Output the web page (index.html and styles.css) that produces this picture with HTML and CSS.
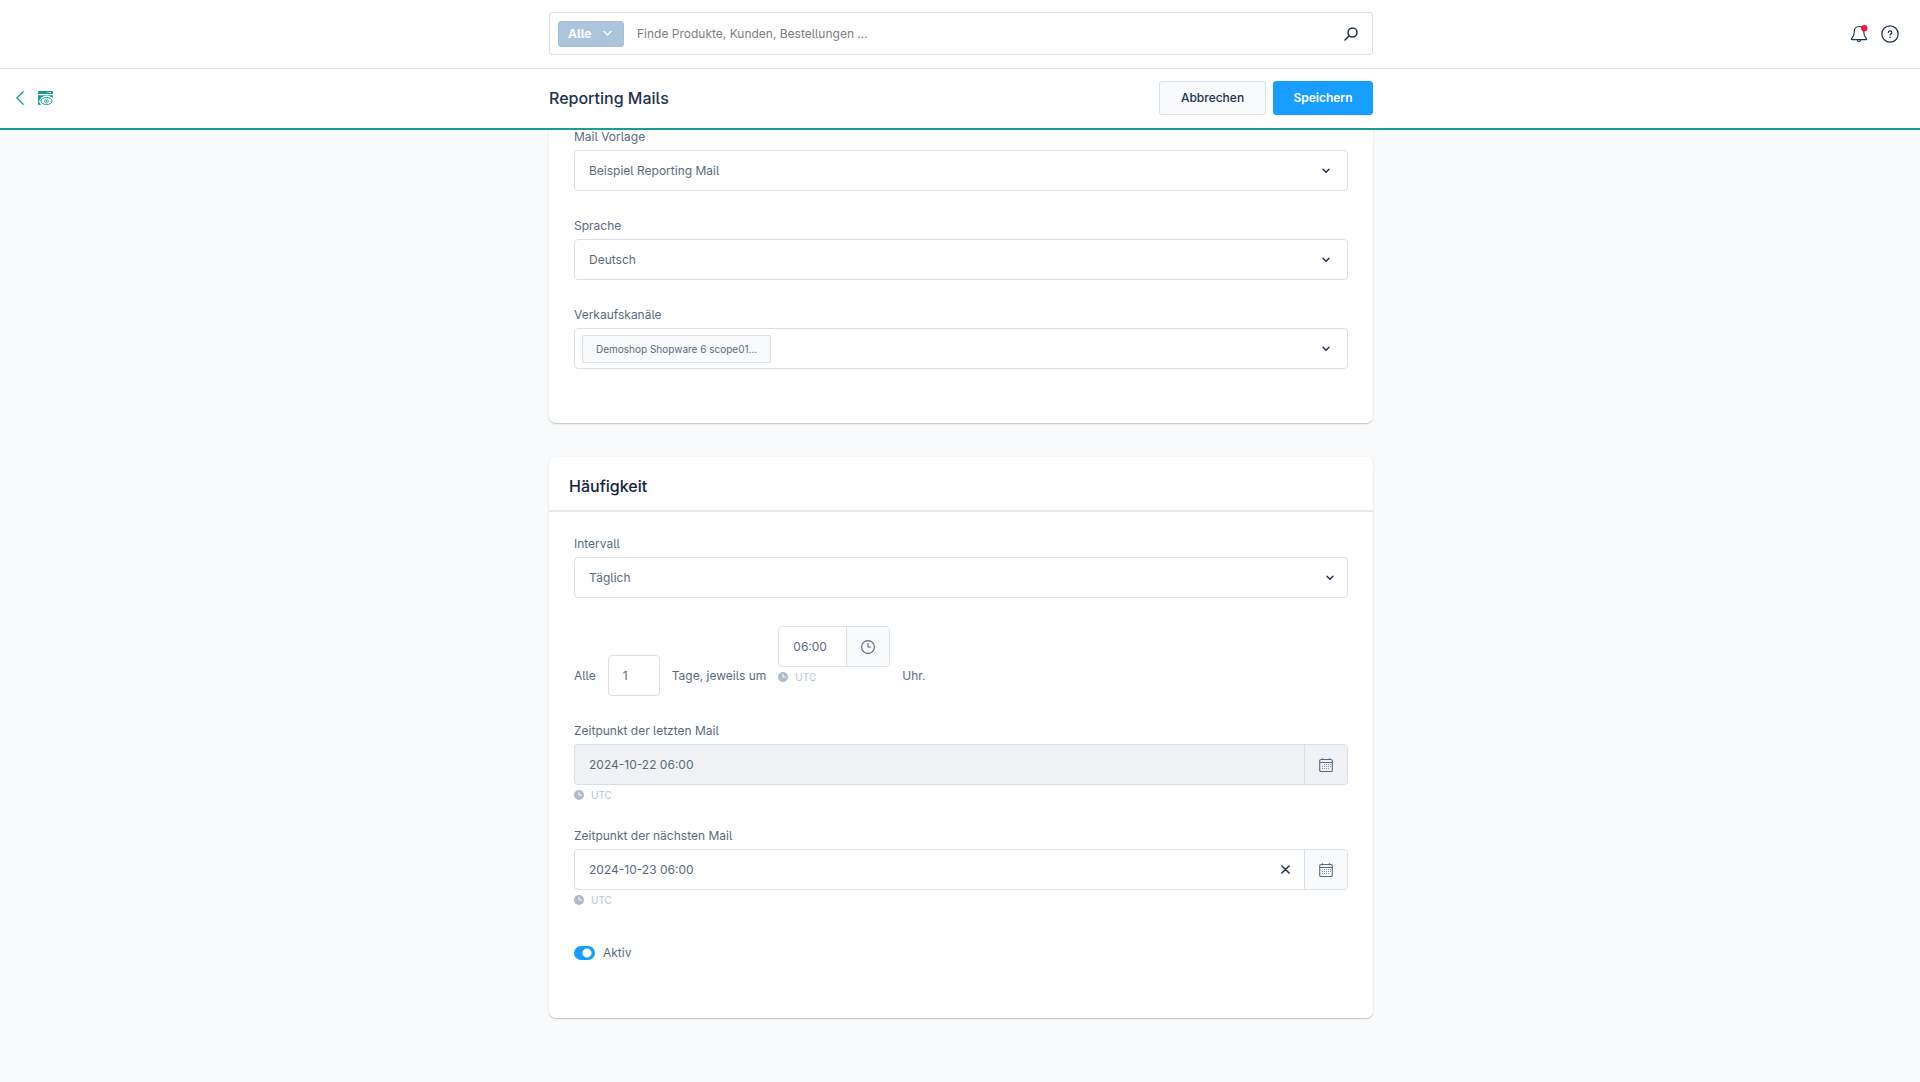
FILE: index.html
```html
<!DOCTYPE html>
<html lang="de">
<head>
<meta charset="utf-8">
<meta name="viewport" content="width=device-width, initial-scale=1">
<title>Reporting Mails</title>
<link rel="stylesheet" href="styles.css">
</head>
<body>
<svg class="sprite" aria-hidden="true">
  <symbol id="chevron" viewBox="0 0 8 6"><path d="M1 1.2 4 4.3 7 1.2" fill="none" stroke="currentColor" stroke-width="1.4" stroke-linecap="round" stroke-linejoin="round"/></symbol>
  <symbol id="clock-solid" viewBox="0 0 10 10"><circle cx="5" cy="5" r="5" fill="currentColor"/><path d="M5 2.2V5.1H7.6" fill="none" stroke="#fff" stroke-width="1" stroke-linecap="round"/></symbol>
  <symbol id="calendar" viewBox="0 0 14 14"><path d="M2 1.500h10a1.300 1.300 0 0 1 1.300 1.300v9.400a1.300 1.300 0 0 1-1.300 1.300H2a1.300 1.300 0 0 1-1.300-1.300V2.800A1.300 1.300 0 0 1 2 1.500zM.7 4.500h12.600M3.500.2v1.400M10.500.2v1.400" fill="none" stroke="currentColor" stroke-width="1.100"/><path d="M5 6.500h7M3 8.500h9M3 10.500h7" fill="none" stroke="currentColor" stroke-width="1" stroke-dasharray="1 1" opacity=".7"/></symbol>
</svg>

<header class="header">
  <div class="topbar">
    <form class="search column" role="search">
      <button class="search-type" type="button">Alle <svg class="search-chevron"><use href="#chevron"/></svg></button>
      <input class="search-input" type="search" aria-label="Suche" placeholder="Finde Produkte, Kunden, Bestellungen ...">
      <button class="icon-button search-submit" type="submit" aria-label="Suchen">
        <svg width="14" height="14" viewBox="0 0 14 14" fill="none" stroke="currentColor" stroke-width="1.500" stroke-linecap="round"><circle cx="8.500" cy="5.500" r="4.500"/><path d="M5.200 8.800 1 13"/></svg>
      </button>
    </form>
    <div class="topbar-actions">
      <button class="icon-button" type="button" aria-label="Benachrichtigungen">
        <svg width="18" height="18" viewBox="0 0 18 18"><path d="M9 1.500c-3 0-4.700 2.200-4.700 4.800 0 3.200-.5 5-2.300 6.900-.9 1-.7 1.500.3 1.500h13.400c1 0 1.200-.5.3-1.500-1.800-1.900-2.300-3.700-2.300-6.900 0-2.600-1.700-4.800-4.700-4.800zM7.200 15c.2 2 3.400 2 3.600 0" fill="none" stroke="currentColor" stroke-width="1.200" stroke-linejoin="round"/><circle cx="14.300" cy="3.200" r="3.200" fill="#ec1c3b"/></svg>
      </button>
      <button class="icon-button" type="button" aria-label="Hilfe">
        <svg width="18" height="18" viewBox="0 0 18 18" fill="none" stroke="currentColor" stroke-linecap="round"><circle cx="9" cy="9" r="8.200" stroke-width="1.200"/><path d="M7.300 7.500c0-2.300 3.500-2.200 3.500 0 0 1.300-1.700 1.300-1.700 2.600" stroke-width="1.200"/><path d="M9.100 12.300v.1" stroke-width="1.400"/></svg>
      </button>
    </div>
  </div>
  <div class="toolbar">
    <div class="toolbar-nav">
      <a class="nav-link" href="#" aria-label="Zurück"><svg width="8" height="14" viewBox="0 0 8 14" fill="none" stroke="currentColor" stroke-width="1.300" stroke-linecap="round" stroke-linejoin="round"><path d="M7.200.7.900 7l6.300 6.300"/></svg></a>
      <a class="nav-link" href="#" aria-label="Reporting"><svg width="15" height="14" viewBox="0 0 15 14"><path d="M1 0h13a1 1 0 0 1 1 1v2H0V1a1 1 0 0 1 1-1zM0 4.200h15v2.600C13 5.300 10.500 4.800 8.300 4.800 5 4.800 2.500 6.700 1 10.300 1.600 12 2 13 3.200 14H1a1 1 0 0 1-1-1z" fill="currentColor"/><path d="M9.500 1.500h1M11.500 1.500h1.500" stroke="#fff" stroke-width="1"/><ellipse cx="8.500" cy="10" rx="5.600" ry="3.500" fill="#fff" stroke="currentColor" stroke-width="1"/><circle cx="8.500" cy="10" r="2" fill="none" stroke="currentColor" stroke-width=".7"/><circle cx="8.500" cy="10" r=".9" fill="currentColor"/></svg></a>
    </div>
    <div class="toolbar-main column">
      <h1 class="page-title">Reporting Mails</h1>
      <button class="button button-cancel" type="button">Abbrechen</button>
      <button class="button button-save" type="submit" form="report-form">Speichern</button>
    </div>
  </div>
</header>

<main class="content">
  <form id="report-form" class="column cards">
    <section class="card card-continued">
      <div class="card-body">
        <div class="field">
          <label class="label" for="template">Mail Vorlage</label>
          <div class="select-box">
            <select class="control" id="template"><option>Beispiel Reporting Mail</option></select>
            <svg class="chevron"><use href="#chevron"/></svg>
          </div>
        </div>
        <div class="field">
          <label class="label" for="language">Sprache</label>
          <div class="select-box">
            <select class="control" id="language"><option>Deutsch</option></select>
            <svg class="chevron"><use href="#chevron"/></svg>
          </div>
        </div>
        <div class="field">
          <label class="label" for="channels">Verkaufskanäle</label>
          <div class="select-box">
            <button class="control control-tags" id="channels" type="button" aria-haspopup="listbox"><span class="tag">Demoshop Shopware 6 scope01...</span></button>
            <svg class="chevron"><use href="#chevron"/></svg>
          </div>
        </div>
      </div>
    </section>

    <section class="card">
      <h2 class="card-title">Häufigkeit</h2>
      <div class="card-body">
        <div class="field">
          <label class="label" for="interval">Intervall</label>
          <div class="select-box">
            <select class="control" id="interval"><option>Täglich</option></select>
            <svg class="chevron chevron-native"><use href="#chevron"/></svg>
          </div>
        </div>

        <div class="schedule">
          <label class="schedule-text" for="every">Alle</label>
          <input class="control control-count" id="every" type="text" inputmode="numeric" value="1">
          <label class="schedule-text" for="time">Tage, jeweils um</label>
          <div class="schedule-time">
            <div class="input-group">
              <input class="group-input" id="time" type="text" value="06:00">
              <button class="group-button" type="button" aria-label="Uhrzeit wählen">
                <svg width="14" height="14" viewBox="0 0 14 14" fill="none" stroke="currentColor" stroke-width="1.100" stroke-linecap="round"><circle cx="7" cy="7" r="6.400"/><path d="M7 3.500V7h2.700"/></svg>
              </button>
            </div>
            <div class="hint"><svg class="hint-icon"><use href="#clock-solid"/></svg>UTC</div>
          </div>
          <span class="schedule-text">Uhr.</span>
        </div>

        <div class="field">
          <label class="label" for="last">Zeitpunkt der letzten Mail</label>
          <div class="input-group is-disabled">
            <input class="group-input" id="last" type="text" value="2024-10-22 06:00" disabled>
            <button class="group-button" type="button" aria-label="Kalender" disabled><svg width="14" height="14"><use href="#calendar"/></svg></button>
          </div>
          <div class="hint"><svg class="hint-icon"><use href="#clock-solid"/></svg>UTC</div>
        </div>

        <div class="field">
          <label class="label" for="next">Zeitpunkt der nächsten Mail</label>
          <div class="input-group">
            <input class="group-input" id="next" type="text" value="2024-10-23 06:00">
            <button class="icon-button clear-button" type="button" aria-label="Leeren"><svg width="9" height="9" viewBox="0 0 8 8" fill="none" stroke="currentColor" stroke-width="1.300" stroke-linecap="round"><path d="M.8.8l6.400 6.400M7.200.8.8 7.200"/></svg></button>
            <button class="group-button" type="button" aria-label="Kalender"><svg width="14" height="14"><use href="#calendar"/></svg></button>
          </div>
          <div class="hint"><svg class="hint-icon"><use href="#clock-solid"/></svg>UTC</div>
        </div>

        <div class="switch-row">
          <input class="switch" id="active" type="checkbox" role="switch" checked>
          <label for="active">Aktiv</label>
        </div>
      </div>
    </section>
  </form>
</main>
</body>
</html>
```
FILE: styles.css
```css
:root {
  --text: #586b80;
  --dark: #1c3350;
  --border: #d8e0e8;
  --surface: #f9fafb;
  --blue: #189eff;
  --green: #1a9c92;
}

* { box-sizing: border-box; }

body {
  margin: 0;
  background: var(--surface);
  color: var(--text);
  font: 12px/18px Inter, "Liberation Sans", sans-serif;
  font-feature-settings: "cv05";
}

button, input, select {
  font: inherit;
  font-feature-settings: inherit;
  color: inherit;
}

button { cursor: pointer; }
svg { display: block; flex: none; }
.sprite { position: absolute; width: 0; height: 0; }

.column {
  width: 100%;
  max-width: 824px;
  grid-column: 2;
}

.icon-button {
  display: flex;
  padding: 0;
  border: 0;
  background: none;
  color: var(--dark);
}

/* Header */
.header {
  position: sticky;
  top: 0;
  z-index: 1;
  background: #fff;
}

.topbar, .toolbar, .content {
  display: grid;
  grid-template-columns: 1fr minmax(0, 824px) 1fr;
  align-items: center;
  padding-left: 2px;
}

.topbar {
  height: 69px;
  padding-bottom: 1px;
  border-bottom: 1px solid var(--border);
}

.search {
  display: flex;
  align-items: center;
  height: 43px;
  padding: 0 14px 0 8px;
  border: 1px solid var(--border);
  border-radius: 3px;
}

.search-type {
  display: flex;
  align-items: center;
  justify-content: space-between;
  width: 66px;
  height: 26px;
  padding: 0 11px 0 9px;
  border: 1px solid #a4bfdc;
  border-radius: 3px;
  background: #adc4dd;
  color: #fff;
  font-weight: 700;
}

.search-chevron { width: 9px; height: 7px; }

.search-input {
  flex: 1;
  min-width: 0;
  padding: 0 13px;
  border: 0;
  background: none;
  outline: 0;
}

.search-input::placeholder { color: #7d7d80; }

.topbar-actions {
  grid-column: 3;
  display: flex;
  justify-content: flex-end;
  gap: 13px;
  padding-right: 21px;
}

.toolbar {
  height: 61px;
  padding-bottom: 1px;
  border-bottom: 2px solid var(--green);
}

.toolbar-nav {
  display: flex;
  align-items: center;
  gap: 14px;
  padding-left: 14px;
}

.nav-link { color: var(--green); }

.toolbar-main {
  display: flex;
  align-items: center;
  gap: 7px;
}

.page-title {
  flex: 1;
  margin: 0;
  color: var(--dark);
  font-size: 16px;
  font-weight: 500;
}

.button {
  width: 107px;
  height: 34px;
  padding: 0;
  border: 1px solid var(--border);
  border-radius: 3px;
  background: var(--surface);
  color: var(--dark);
  font-weight: 500;
}

.button-save {
  width: 100px;
  border-color: var(--blue);
  background: var(--blue);
  color: #fff;
  font-weight: 600;
}

/* Cards */
.content {
  margin-top: -2px;
  padding-bottom: 64px;
}

.cards {
  display: flex;
  flex-direction: column;
  gap: 34px;
}

.card {
  border-radius: 7px;
  background: #fff;
  box-shadow: 0 1px 1px rgba(0, 0, 0, .16), 0 1px 3px rgba(0, 0, 0, .08);
}

.card-continued { border-radius: 0 0 7px 7px; }

.card-title {
  margin: 0;
  padding: 20px 20px 15px;
  border-bottom: 2px solid #e5eaef;
  color: #14233f;
  font-size: 16px;
  font-weight: 500;
  line-height: 18px;
}

.card-body {
  display: flex;
  flex-direction: column;
  gap: 26px;
  padding: 23px 25px 54px;
}

.card-continued .card-body { padding-top: 0; }

.label {
  display: block;
  margin-bottom: 4px;
}

.control, .input-group {
  width: 100%;
  height: 41px;
  border: 1px solid var(--border);
  border-radius: 4px;
  background: #fff;
}

.control {
  padding: 0 14px;
  appearance: none;
}

.select-box {
  display: grid;
  align-items: center;
}

.select-box > * { grid-area: 1 / 1; }

.chevron {
  justify-self: end;
  width: 8px;
  height: 6px;
  margin-right: 18px;
  color: var(--dark);
  pointer-events: none;
}

.chevron-native { margin-right: 14px; }

.control-tags {
  display: flex;
  align-items: center;
  padding: 0 7px;
}

.tag {
  height: 28px;
  padding: 0 13px;
  border: 1px solid var(--border);
  border-radius: 2px;
  background: var(--surface);
  font-size: 10px;
  line-height: 26px;
}

.input-group {
  display: flex;
  overflow: hidden;
}

.group-input {
  flex: 1;
  min-width: 0;
  padding: 0 14px;
  border: 0;
  background: none;
}

.clear-button { align-self: center; padding: 0 14px; }

.group-button {
  display: flex;
  align-items: center;
  justify-content: center;
  width: 43px;
  padding: 0;
  border: 0;
  border-left: 1px solid var(--border);
  background: var(--surface);
}

.is-disabled, .is-disabled .group-button { background: #f0f2f5; }

.hint {
  display: flex;
  align-items: center;
  gap: 7px;
  padding-top: 4px;
  color: #b9c4d2;
  font-size: 10px;
  line-height: 12px;
}

.hint-icon { width: 10px; height: 10px; color: #adbaca; }

/* Interval sentence */
.schedule {
  display: flex;
  align-items: flex-end;
  gap: 12px;
  padding-top: 2px;
}

.schedule-text { line-height: 41px; }
.control-count { width: 52px; }
.schedule-time { width: 112px; padding-bottom: 13px; }

/* Active switch */
.switch-row {
  display: flex;
  align-items: center;
  gap: 8px;
  height: 22px;
  margin-top: 10px;
}

.switch {
  width: 21px;
  height: 14px;
  margin: 0;
  border-radius: 7px;
  background: radial-gradient(circle at 13px 7px, #fff 4px, var(--blue) 5px);
  appearance: none;
}
```
